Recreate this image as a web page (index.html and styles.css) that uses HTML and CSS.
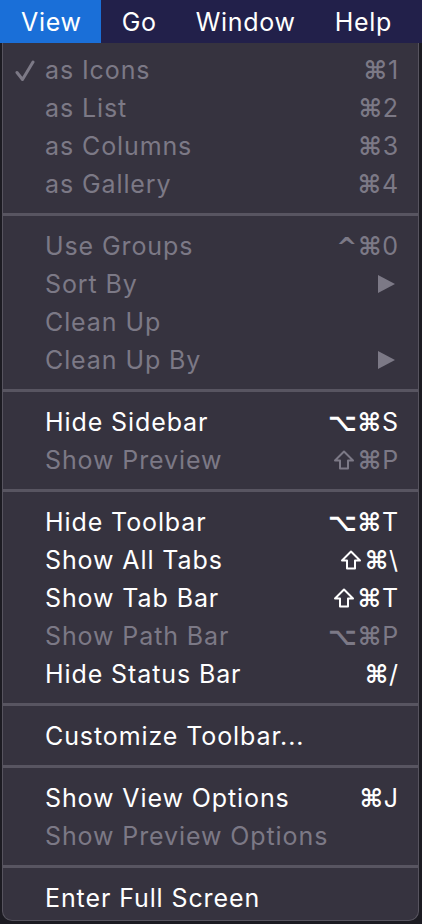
FILE: index.html
```html
<!DOCTYPE html>
<html>
<head>
<meta charset="utf-8">
<link rel="stylesheet" href="styles.css">
</head>
<body>
<div class="menubar">
  <div class="mb-item active">View</div>
  <div class="mb-item">Go</div>
  <div class="mb-item">Window</div>
  <div class="mb-item">Help</div>
</div>
<div class="panel">
  <div class="row dis"><svg class="check" width="20" height="22" viewBox="0 0 20 22"><path d="M2 12.5 L7.5 19.5 L18 2" fill="none" stroke="currentColor" stroke-width="3" stroke-linecap="round" stroke-linejoin="round"/></svg><span class="label">as Icons</span><span class="key"><span class="sym">⌘</span>1</span></div>
  <div class="row dis"><span class="label">as List</span><span class="key"><span class="sym">⌘</span>2</span></div>
  <div class="row dis"><span class="label">as Columns</span><span class="key"><span class="sym">⌘</span>3</span></div>
  <div class="row dis"><span class="label">as Gallery</span><span class="key"><span class="sym">⌘</span>4</span></div>
  <div class="sep"></div>
  <div class="row dis"><span class="label">Use Groups</span><span class="key"><span class="sym">^⌘</span>0</span></div>
  <div class="row dis"><span class="label">Sort By</span><span class="arrow"></span></div>
  <div class="row dis"><span class="label">Clean Up</span></div>
  <div class="row dis"><span class="label">Clean Up By</span><span class="arrow"></span></div>
  <div class="sep"></div>
  <div class="row"><span class="label">Hide Sidebar</span><span class="key"><span class="sym">⌥⌘</span>S</span></div>
  <div class="row dis"><span class="label">Show Preview</span><span class="key"><svg class="shift" width="22" height="20" viewBox="0 0 22 20"><path d="M11 1.5 L20 10.5 H15 V18.5 H7 V10.5 H2 Z" fill="none" stroke="currentColor" stroke-width="2" stroke-linejoin="round"/></svg><span class="sym">⌘</span>P</span></div>
  <div class="sep"></div>
  <div class="row"><span class="label">Hide Toolbar</span><span class="key"><span class="sym">⌥⌘</span>T</span></div>
  <div class="row"><span class="label">Show All Tabs</span><span class="key"><svg class="shift" width="22" height="20" viewBox="0 0 22 20"><path d="M11 1.5 L20 10.5 H15 V18.5 H7 V10.5 H2 Z" fill="none" stroke="currentColor" stroke-width="2" stroke-linejoin="round"/></svg><span class="sym">⌘</span>\</span></div>
  <div class="row"><span class="label">Show Tab Bar</span><span class="key"><svg class="shift" width="22" height="20" viewBox="0 0 22 20"><path d="M11 1.5 L20 10.5 H15 V18.5 H7 V10.5 H2 Z" fill="none" stroke="currentColor" stroke-width="2" stroke-linejoin="round"/></svg><span class="sym">⌘</span>T</span></div>
  <div class="row dis"><span class="label">Show Path Bar</span><span class="key"><span class="sym">⌥⌘</span>P</span></div>
  <div class="row"><span class="label">Hide Status Bar</span><span class="key"><span class="sym">⌘</span>/</span></div>
  <div class="sep"></div>
  <div class="row"><span class="label">Customize Toolbar...</span></div>
  <div class="sep"></div>
  <div class="row"><span class="label">Show View Options</span><span class="key"><span class="sym">⌘</span>J</span></div>
  <div class="row dis"><span class="label">Show Preview Options</span></div>
  <div class="sep"></div>
  <div class="row"><span class="label">Enter Full Screen</span></div>
</div>
</body>
</html>
```
FILE: styles.css
```css
html, body {
  margin: 0;
  padding: 0;
  background: #1c1b22;
  width: 422px;
  height: 924px;
  overflow: hidden;
  font-family: Inter, "Liberation Sans", sans-serif;
  -webkit-font-smoothing: antialiased;
}
.menubar {
  height: 43px;
  background: #22204a;
  display: flex;
  align-items: center;
  color: #fff;
  font-size: 25px;
  letter-spacing: 0.7px;
}
.mb-item {
  height: 43px;
  display: flex;
  align-items: center;
  padding: 0 18px 0 21px;
}
.mb-item.active {
  background: #1a6fd8;
  padding-right: 19px;
}
.panel {
  margin: 0 3px 0 2px;
  height: 878px;
  background: #36333f;
  border: 1px solid #57545f;
  border-top: none;
  border-radius: 0 0 10px 10px;
  padding: 8px 0 0 0;
  box-sizing: border-box;
}
.row {
  position: relative;
  height: 38px;
  display: flex;
  align-items: center;
  padding: 0 19px 0 42px;
  color: #fff;
  font-size: 25px;
  letter-spacing: 0.9px;
}
.row.dis { color: #7c7986; }
.label { flex: 1; }
.check {
  position: absolute;
  left: 12px;
  top: 9px;
}
.key {
  display: flex;
  align-items: center;
}
.sym {
  font-family: "DejaVu Sans", sans-serif;
  font-size: 25px;
  font-weight: bold;
  letter-spacing: 1px;
}
.shift {
  margin-right: 3px;
}
.arrow {
  width: 0;
  height: 0;
  border-left: 17px solid currentColor;
  border-top: 9px solid transparent;
  border-bottom: 9px solid transparent;
  margin-right: 4px;
}
.sep {
  height: 3px;
  background: #585561;
  margin: 10px 0 11px;
}
```
